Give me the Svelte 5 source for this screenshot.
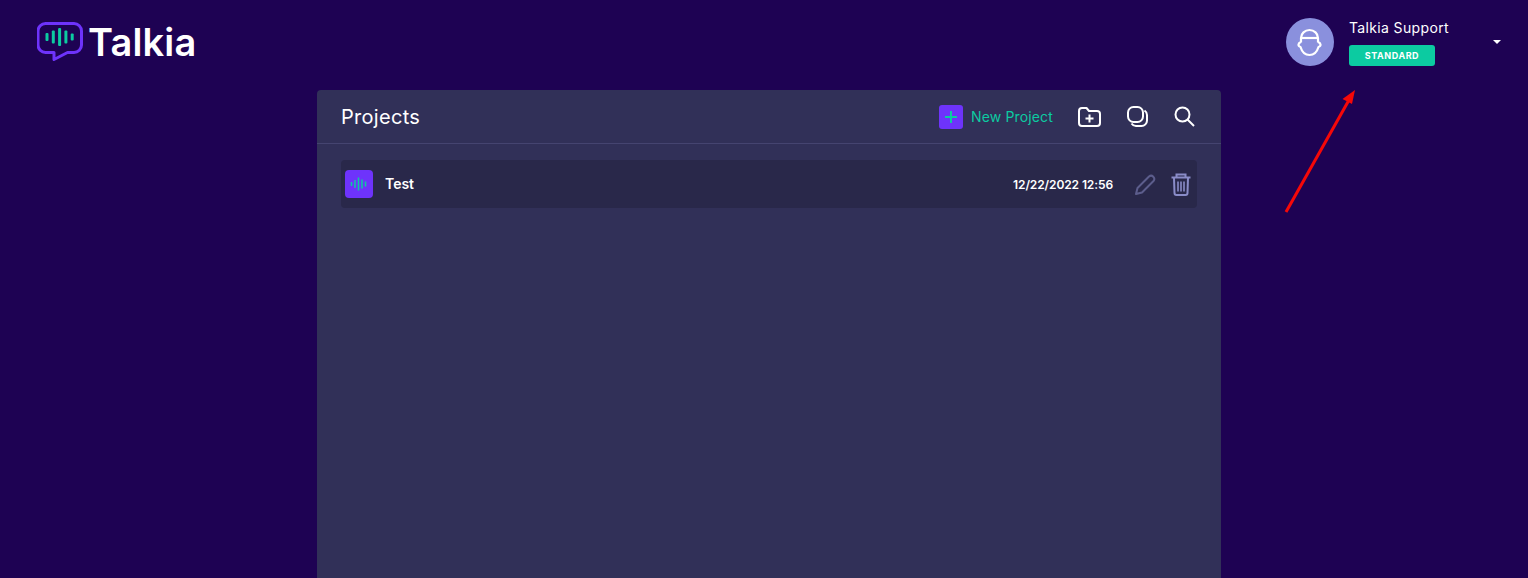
<script>
  const bars = [8, 13, 18, 13, 7];
  const smallBars = [
    [1.5, 4],
    [5, 8],
    [8.5, 13],
    [12, 9],
    [15.5, 5],
  ];
</script>

<div class="page">
  <header class="topbar">
    <div class="logo">
      <svg width="46" height="40" viewBox="0 0 46 40" fill="none">
        <path
          d="M9 1.500h28a7.500 7.500 0 0 1 7.500 7.500v14a7.500 7.500 0 0 1-7.500 7.500h-6.500l-13.500 7v-7h-8.500a7.500 7.500 0 0 1-7.500-7.500v-14a7.500 7.500 0 0 1 7.500-7.500z"
          stroke="#6e33fb"
          stroke-width="3"
          stroke-linejoin="round"
        />
        {#each bars as h, i}
          <rect x={8.5 + i * 6.300} y={15 - h / 2} width="3" height={h} rx="1" fill="#0ccba1" />
        {/each}
      </svg>
      <span class="wordmark">Talkia</span>
    </div>

    <div class="user">
      <div class="avatar">
        <svg width="30" height="30" viewBox="0 0 30 30" fill="none" stroke="#fff" stroke-width="2.200">
          <path d="M6 15.500V11a8.500 8 0 0 1 17 0v4.500" />
          <path d="M6 11h17" />
          <path d="M6 15C3 16 2.500 19 5.500 20 7 25 10 28 14.500 28S22 25 23.500 20C26.500 19 26 16 23 15" stroke-linejoin="round" />
        </svg>
      </div>
      <div class="user-info">
        <div class="user-name">Talkia Support</div>
        <div class="plan">STANDARD</div>
      </div>
      <span class="caret"></span>
    </div>
  </header>

  <main class="content">
    <section class="panel">
      <div class="panel-head">
        <h1>Projects</h1>
        <div class="actions">
          <button class="new-project">
            <span class="plus">
              <svg width="14" height="14" viewBox="0 0 14 14" stroke="#0ccba1" stroke-width="2">
                <path d="M7 1v12M1 7h12" />
              </svg>
            </span>
            New Project
          </button>
          <button class="icon-btn" aria-label="New folder">
            <svg width="23" height="20" viewBox="0 0 23 20" fill="none" stroke="#fff" stroke-width="2">
              <path d="M1 4a3 3 0 0 1 3-3h4.500l2.500 3h8a3 3 0 0 1 3 3v9a3 3 0 0 1-3 3H4a3 3 0 0 1-3-3z" stroke-linejoin="round" />
              <path d="M11.500 7.500v8M7.500 11.500h8" />
            </svg>
          </button>
          <button class="icon-btn" aria-label="Copy">
            <svg width="21" height="21" viewBox="0 0 21 21" fill="none" stroke="#fff" stroke-width="2">
              <rect x="1" y="1" width="15" height="15" rx="5.500" />
              <path d="M17.500 4.500A5.500 5.500 0 0 1 20 9v5.500a5.500 5.500 0 0 1-5.500 5.500H9a5.500 5.500 0 0 1-4.500-2.500" />
            </svg>
          </button>
          <button class="icon-btn" aria-label="Search">
            <svg width="21" height="21" viewBox="0 0 21 21" fill="none" stroke="#fff" stroke-width="2">
              <circle cx="8.500" cy="8.500" r="7" />
              <path d="M13.500 13.500l6.500 6.500" />
            </svg>
          </button>
        </div>
      </div>

      <div class="list">
        <div class="row">
          <span class="row-icon">
            <svg width="18" height="14" viewBox="0 0 18 14">
              {#each smallBars as [x, h]}
                <rect x={x - 0.75} y={7 - h / 2} width="1.500" height={h} fill="#0ccba1" />
              {/each}
            </svg>
          </span>
          <span class="row-name">Test</span>
          <span class="row-date">12/22/2022 12:56</span>
          <svg class="pencil" width="22" height="22" viewBox="0 0 22 22" fill="none" stroke="#5c5d8c" stroke-width="2">
            <path d="M2 21l1.500-6L15 3.500a3.200 3.200 0 0 1 4.500 4.500L8 19.500z" stroke-linejoin="round" />
          </svg>
          <svg class="trash" width="20" height="23" viewBox="0 0 20 23" fill="none" stroke="#8a8cc8" stroke-width="2">
            <path d="M0.500 4.500h19M5.500 4V1.500h9V4" />
            <path d="M3 5l0.500 15a2 2 0 0 0 2 2h9a2 2 0 0 0 2-2L17 5" />
            <path d="M7 8.500v10M10 8.500v10M13 8.500v10" stroke-width="1.600" />
          </svg>
        </div>
      </div>
    </section>
  </main>

  <svg class="arrow" width="80" height="130" viewBox="0 0 80 130" fill="none">
    <path d="M2 126L65 14" stroke="#f50808" stroke-width="3" />
    <path d="M71 4l-3 14-9.500-5z" fill="#f50808" />
  </svg>
</div>

<style>
  :global(body) {
    margin: 0;
    background: #1e0253;
    overflow: hidden;
  }

  .page {
    position: relative;
    height: 578px;
    overflow: hidden;
    background: #1e0253;
    color: #fff;
    font-family: Inter, "Noto Sans", sans-serif;
  }

  .topbar {
    display: flex;
    align-items: center;
    justify-content: space-between;
    height: 90px;
    padding: 0 27px 6px 37px;
    box-sizing: border-box;
  }

  .logo {
    display: flex;
    align-items: center;
    gap: 5px;
  }

  .wordmark {
    font-size: 38px;
    font-weight: 600;
    line-height: 40px;
    letter-spacing: 0.15px;
  }

  .user {
    display: flex;
    align-items: center;
  }

  .avatar {
    display: flex;
    align-items: center;
    justify-content: center;
    width: 48px;
    height: 48px;
    border-radius: 50%;
    background: #8a90dd;
  }

  .user-info {
    width: 144px;
    margin-left: 15px;
  }

  .user-name {
    font-size: 14px;
    line-height: 20px;
    letter-spacing: 0.35px;
  }

  .plan {
    width: 86px;
    height: 21px;
    margin-top: 7px;
    border-radius: 3px;
    background: #0ccba1;
    font-size: 9px;
    font-weight: 700;
    line-height: 21px;
    letter-spacing: 0.55px;
    text-align: center;
  }

  .caret {
    width: 0;
    height: 0;
    border-top: 4px solid #fff;
    border-right: 4px solid transparent;
    border-left: 4px solid transparent;
  }

  .content {
    display: grid;
    grid-template-columns: 904px;
    padding-left: 317px;
  }

  .panel {
    height: 488px;
    border-radius: 4px 4px 0 0;
    background: #313058;
  }

  .panel-head {
    display: flex;
    align-items: center;
    justify-content: space-between;
    height: 53px;
    padding: 0 26px 0 24px;
    border-bottom: 1px solid #454470;
  }

  h1 {
    margin: 0;
    font-size: 20px;
    font-weight: 400;
    letter-spacing: 0.3px;
  }

  .actions {
    display: flex;
    align-items: center;
  }

  button {
    display: flex;
    align-items: center;
    padding: 0;
    border: 0;
    background: none;
    font-family: inherit;
  }

  .new-project {
    gap: 8px;
    margin-right: 25px;
    color: #0ccba1;
    font-size: 14px;
    letter-spacing: 0.15px;
  }

  .plus {
    display: flex;
    align-items: center;
    justify-content: center;
    width: 24px;
    height: 24px;
    border-radius: 3px;
    background: #6e33fb;
  }

  .icon-btn + .icon-btn {
    margin-left: 26px;
  }

  .list {
    padding: 16px 24px;
  }

  .row {
    display: flex;
    align-items: center;
    height: 48px;
    padding: 0 6px 0 4px;
    border-radius: 4px;
    background: #29284a;
  }

  .row-icon {
    display: flex;
    align-items: center;
    justify-content: center;
    width: 28px;
    height: 28px;
    border-radius: 4px;
    background: #6e33fb;
  }

  .row-name {
    flex: 1;
    margin: 0 0 2px 12px;
    font-size: 14px;
    font-weight: 600;
  }

  .row-date {
    font-size: 12px;
    font-weight: 600;
    letter-spacing: -0.1px;
  }

  .pencil {
    margin-left: 21px;
  }

  .trash {
    margin-left: 15px;
  }

  .arrow {
    position: absolute;
    top: 86px;
    left: 1284px;
  }
</style>
